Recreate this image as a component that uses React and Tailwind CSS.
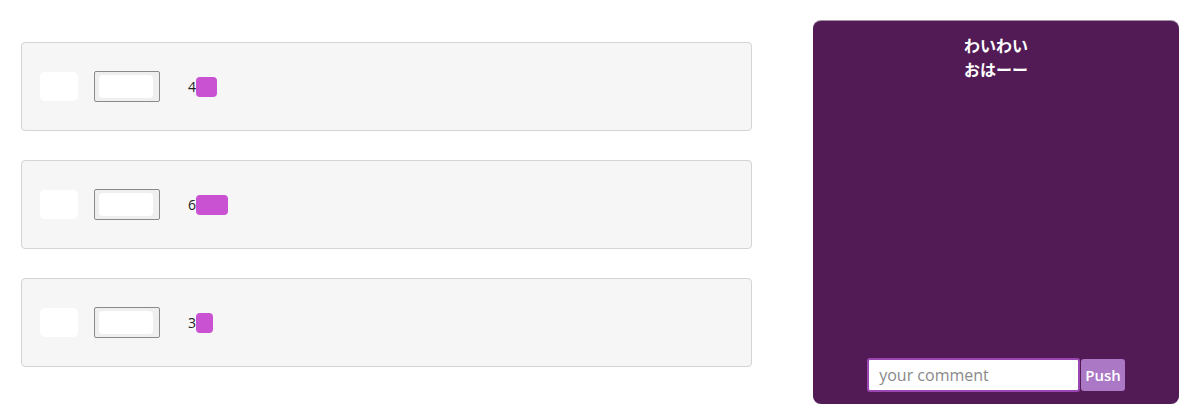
const rows = [
	{ value: 4, bar: 21 },
	{ value: 6, bar: 32 },
	{ value: 3, bar: 17 },
];

function Row({ value, bar }) {
	return (
		<div className="flex items-center h-[89px] bg-[#f6f6f6] border border-[#d4d4d4] rounded-[4px] pl-[18px]">
			<div className="w-[38px] h-[29px] bg-white rounded-[5px]" />
			<div className="ml-[16px] w-[66px] h-[31px] border border-[#8a8a8a] bg-[#efefef] rounded-[2px] flex items-center pl-[4px]">
				<div className="w-[54px] h-[23px] bg-white rounded-[4px]" />
			</div>
			<span className="ml-[28px] text-[14px] text-[#222] leading-none">{value}</span>
			<div
				className="h-[20px] bg-[#c952d3] rounded-[4px]"
				style={{ width: bar }}
			/>
		</div>
	);
}

export default function App() {
	return (
		<div className="w-[1189px] h-[408px] bg-white flex pl-[21px] pt-[21px] font-['Open_Sans','Noto_Sans_CJK_JP',sans-serif]">
			<div className="w-[731px] flex flex-col gap-[29px] pt-[21px]">
				{rows.map((r, i) => (
					<Row key={i} {...r} />
				))}
			</div>

			<div className="ml-[61px] w-[366px] h-[383px] bg-[#521b56] rounded-[8px] shadow-[0_-1px_0_#a391a6] flex flex-col items-center">
				<div className="mt-[13px] text-white font-bold text-[16px] leading-[24px] text-center">
					<p>わいわい</p>
					<p>おはーー</p>
				</div>
				<div className="mt-auto mb-[12px] flex items-center gap-[1px]">
					<input
						placeholder="your comment"
						className="w-[213px] h-[34px] bg-white border-2 border-[#9b47b3] rounded-[3px] px-[10px] text-[16px] text-[#333] placeholder:text-[#8a8a8a] outline-none"
					/>
					<button className="h-[32px] px-[4px] bg-[#ab78c6] text-white text-[15px] font-semibold rounded-[3px]">
						Push
					</button>
				</div>
			</div>
		</div>
	);
}
